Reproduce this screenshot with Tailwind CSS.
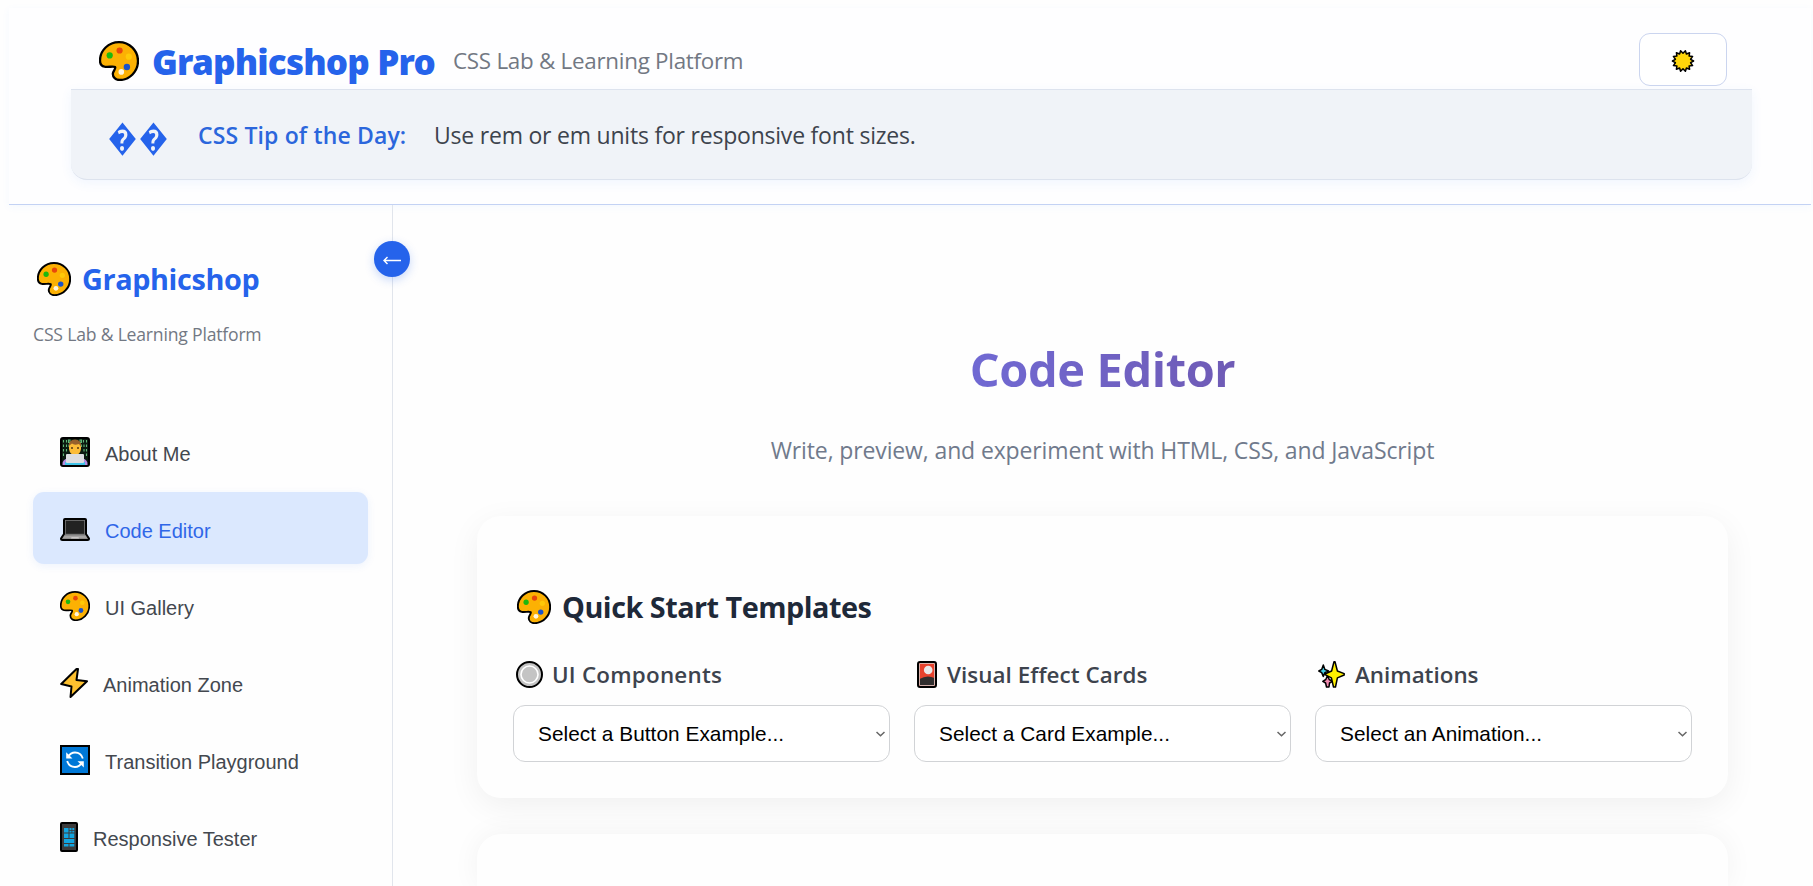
<!DOCTYPE html>
<html lang="en">
<head>
<meta charset="utf-8">
<title>Graphicshop Pro</title>
<script src="https://cdn.jsdelivr.net/npm/@tailwindcss/browser@4"></script>
</head>
<body class="h-screen overflow-hidden bg-[#fefefe] font-['Open_Sans','Noto_Sans',sans-serif] text-[#3d434d]">
<svg class="hidden">
  <symbol id="palette" viewBox="0 0 40 40">
    <path d="M20 1.2C30.5 1.2 39 9.5 39 20C39 30.5 30.5 39 20.5 39C16.500 39 13.800 36.200 13.800 32.800C13.800 30 17.500 27.200 16 26C14.500 25 9 26.400 5.500 25.700C2.500 25 1 22.500 1 19.500C1 9.200 9.600 1.200 20 1.200Z" fill="#fcb103" stroke="#000" stroke-width="2.3"/>
    <circle cx="10.700" cy="14.400" r="3.100" fill="#1db80f"/><circle cx="20.600" cy="9.500" r="3.100" fill="#e8480c"/><circle cx="29.800" cy="15.700" r="3.100" fill="#ffc907"/><circle cx="27.900" cy="26" r="3.200" fill="#1a52c9"/><circle cx="22.300" cy="30.900" r="2.800" fill="#fff6df"/>
  </symbol>
</svg>
<div class="flex h-full flex-col">
  <header class="relative mt-2 mr-[2px] ml-[9px] h-[197px] shrink-0 border-b border-[#c3d2f4] bg-[#fefeff] pr-[59px] pl-[62px] shadow-[0_2px_8px_rgba(59,130,246,0.05)]">
    <div class="flex h-[81px] items-center pt-[25px] pr-[25px] pl-7">
      <svg class="size-10 shrink-0"><use href="#palette"/></svg>
      <h1 class="mt-[2px] ml-[13px] w-[285px] font-['Noto_Sans',sans-serif] text-[35px] leading-10 font-black tracking-[-0.820px] whitespace-nowrap text-[#2563eb]">Graphicshop Pro</h1>
      <p class="mb-[1px] ml-[16px] text-[22.4px] leading-8 tracking-[-0.270px] whitespace-nowrap text-[#727883]">CSS Lab &amp; Learning Platform</p>
      <button class="-mt-[3px] ml-auto flex h-[53px] w-[88px] shrink-0 items-center justify-center rounded-[11px] border border-[#cbd5ef] bg-white">
        <svg class="mt-[3px] size-6" viewBox="-12 -12 24 24"><path d="M10.600 0L7.600 1.700L9.600 4.600L6.100 4.900L6.600 8.300L3.400 7L2.400 10.300L0 7.800L-2.400 10.300L-3.400 7L-6.600 8.300L-6.100 4.900L-9.600 4.600L-7.600 1.700L-10.600 0L-7.600 -1.700L-9.600 -4.600L-6.100 -4.900L-6.600 -8.300L-3.400 -7L-2.400 -10.300L0 -7.800L2.400 -10.300L3.400 -7L6.600 -8.300L6.100 -4.900L9.600 -4.600L7.600 -1.700Z" fill="#ffd60a" stroke="#000" stroke-width="1.500" stroke-linejoin="round"/></svg>
      </button>
    </div>
    <div class="flex h-[91px] items-center rounded-b-2xl border-y border-[#dde3ee] bg-[#f0f3f8] pl-[37px] text-[23px] leading-8 whitespace-nowrap shadow-[0_3px_12px_rgba(59,130,246,0.07)]">
      <span class="mt-[2px] w-[62px] scale-y-125 text-[29px] leading-8 tracking-[2px] text-[#2563eb]">��</span>
      <span class="mt-[1px] ml-[28px] w-[208px] font-semibold tracking-[0.140px] text-[#2b66dc]">CSS Tip of the Day:</span>
      <span class="mt-[1px] ml-[28px] tracking-[-0.215px]">Use rem or em units for responsive font sizes.</span>
    </div>
  </header>

  <div class="flex min-h-0 flex-1">
    <aside class="relative w-[393px] shrink-0 border-r border-[#e1e5ec] pt-[54px] pr-6 pl-[33px]">
      <button class="absolute top-[36px] -right-[18px] flex size-9 items-center justify-center rounded-full bg-[#2563eb] shadow-[0_3px_10px_rgba(37,99,235,0.25)]">
        <svg class="h-5 w-5" viewBox="0 0 20 20" fill="none" stroke="#fff" stroke-width="1.400"><path d="M2 11.500H19M5.500 8L2 11.500L5.500 15"/></svg>
      </button>
      <div class="flex h-10 items-center pl-1">
        <svg class="size-[34px] shrink-0"><use href="#palette"/></svg>
        <h2 class="ml-[11px] text-[28.800px] leading-10 font-bold tracking-[-0.370px] text-[#2563eb]">Graphicshop</h2>
      </div>
      <p class="mt-[23px] h-6 text-[17.600px] leading-6 tracking-[-0.200px] whitespace-nowrap text-[#727883]">CSS Lab &amp; Learning Platform</p>
      <nav class="mt-[69px] flex h-[266px] flex-col gap-[5px] font-['Liberation_Sans',sans-serif] text-[20px] leading-6 text-[#43484f]">
        <a class="flex h-[72px] shrink-0 items-center gap-[15px] pl-[27px]">
          <svg class="mt-[2px] size-[30px]" viewBox="0 0 30 30">
            <rect x="1" y="1" width="28" height="28" rx="2" fill="#0b1a10" stroke="#000" stroke-width="2"/>
            <g fill="none" stroke="#62b878" stroke-width="1.100"><path d="M3.500 3V5.500M6.500 3V5.500M23.500 3V5.500M26.500 3V5.500M3.500 7.500V10M6.500 7.500V10M9 7.500V10M21.500 7.500V10M24 7.500V10M26.500 7.500V10M3.500 12V14.500M6.500 12V14.500M24 12V14.500M26.500 12V14.500M3.500 16.500V19M26.500 16.500V19"/><path d="M8.500 3h1.500v2.500h-1.500zM20 3h1.500v2.500h-1.500z"/></g>
            <path d="M2.500 28Q2 22.500 7.500 21.500H22.500Q28 22.500 27.500 28Z" fill="#b58be0"/>
            <path d="M5 25H25V28H5Z" fill="#3fc3e8"/>
            <path d="M9 8Q9 4 15 4Q21 4 21 9V12Q20 18 15 18Q10 18 9 12Z" fill="#fcbc38"/>
            <path d="M8.800 9Q8.500 3 15 2.500Q21.500 2.500 21.200 10L19 7Q14 8.500 12 6.500Z" fill="#96602c"/>
            <path d="M12 10V12M18 10V12" stroke="#3b2410" stroke-width="1.300"/>
            <rect x="6" y="17" width="18" height="9" rx="1" fill="#dcdde0"/>
          </svg>
          <span class="pt-[5px]">About Me</span>
        </a>
        <a class="flex h-[72px] shrink-0 items-center gap-[15px] rounded-[11px] bg-[#dbe8fe] pl-[27px] text-[#2f66e8] shadow-[0_2px_8px_rgba(37,99,235,0.08)]">
          <svg class="mt-[2px] size-[30px]" viewBox="0 0 30 30">
            <path d="M4 20V6Q4 5 5 5H25Q26 5 26 6V20L29 24.500Q29 26 27.500 26H2.500Q1 26 1 24.500Z" fill="#777" stroke="#000" stroke-width="2" stroke-linejoin="round"/>
            <rect x="5.800" y="6.800" width="18.400" height="13" fill="#222"/>
            <path d="M4.500 21.500H25.500L27.500 24.500H2.500Z" fill="#a5a3a3"/><path d="M11.500 23H18.500L19 24.500H11Z" fill="#c9c7c7"/>
          </svg>
          <span class="pt-[5px]">Code Editor</span>
        </a>
        <a class="flex h-[72px] shrink-0 items-center gap-[15px] pl-[27px]">
          <svg class="mt-[2px] size-[30px]"><use href="#palette"/></svg>
          <span class="pt-[5px]">UI Gallery</span>
        </a>
        <a class="flex h-[72px] shrink-0 items-center gap-[15px] pl-[27px]">
          <svg class="mt-[2px] h-[30px] w-7" viewBox="0 0 28 30"><path d="M16.500 1L1.200 16L11.500 18.500L10.500 29L27 13.200L16.500 12L18 1Z" fill="#fdc02f" stroke="#000" stroke-width="2" stroke-linejoin="round"/></svg>
          <span class="pt-[5px]">Animation Zone</span>
        </a>
        <a class="flex h-[72px] shrink-0 items-center gap-[15px] pl-[27px]">
          <svg class="mt-[2px] size-[30px]" viewBox="0 0 30 30"><rect x="1" y="1" width="28" height="28" fill="#0078d7" stroke="#000" stroke-width="2"/><g fill="none" stroke="#fff" stroke-width="1.800"><path d="M8 12Q10.500 7.500 15 7.500Q21 7.500 22.800 13.500M22 17.500Q19.500 22 15 22Q9 22 7.200 16"/></g><path d="M6.200 7.200V13.500H12.500ZM23.800 22.500V16.200H17.500Z" fill="#fff"/></svg>
          <span class="pt-[5px]">Transition Playground</span>
        </a>
        <a class="flex h-[72px] shrink-0 items-center gap-[15px] pl-[27px]">
          <svg class="mt-[2px] h-[30px] w-[18px]" viewBox="0 0 18 30"><rect x="1" y="1" width="16" height="28" rx="1" fill="#3b3b3b" stroke="#000" stroke-width="2"/><g fill="#12a5e0"><path d="M4 6h4.500v4.500H4zM9.500 6h2v2h-2zM12.300 6h2v2h-2zM9.500 8.700h2v1.800h-2zM12.300 8.700h2v1.800h-2zM4 11.500h4.500V16H4zM9.500 11.500h4.800V16H9.500zM4 17h10.300v4H4zM4 22h4.500v2.500H4zM9.500 22h4.800v2.500H9.500z"/></g></svg>
          <span class="pt-[5px]">Responsive Tester</span>
        </a>
      </nav>
    </aside>

    <main class="min-w-0 flex-1 pr-[85px] pl-[84px]">
      <h2 class="mt-[132px] h-16 text-center text-[47px] leading-[64px] font-bold tracking-[-0.400px]"><span class="bg-linear-to-r from-[#7069d3] to-[#6f5bb5] bg-clip-text text-transparent">Code Editor</span></h2>
      <p class="mt-[33px] h-8 text-center text-[23px] leading-8 tracking-[-0.130px] text-[#707a8c]">Write, preview, and experiment with HTML, CSS, and JavaScript</p>

      <section class="mt-[50px] h-[282px] rounded-3xl bg-[#fefefe] px-9 pt-[70px] shadow-[0_8px_32px_rgba(0,0,0,0.06)]">
        <div class="flex h-10 items-center pl-1">
          <svg class="mt-[2px] size-[34px]"><use href="#palette"/></svg>
          <h3 class="mt-[2px] ml-[11px] text-[28.800px] leading-10 font-bold tracking-[-0.500px] text-gray-800">Quick Start Templates</h3>
        </div>
        <div class="mt-8 grid grid-cols-3 gap-6">
          <div>
            <div class="flex h-8 items-center pl-[3px]">
              <svg class="mt-[1px] size-[27px]" viewBox="0 0 27 27"><circle cx="13.500" cy="13.500" r="12.500" fill="#c4c4c4" stroke="#000" stroke-width="2"/><circle cx="13.500" cy="13.500" r="8.500" fill="#c4c4c4" stroke="#fff" stroke-width="1.600"/></svg>
              <span class="mt-[1px] ml-[9px] text-[22.400px] leading-8 font-semibold tracking-[0.224px]">UI Components</span>
            </div>
            <button class="mt-[15px] flex h-[57px] w-full items-center justify-between rounded-xl border border-[#d1d3d6] bg-white pr-[4px] pl-[24px] font-['Liberation_Sans',sans-serif] text-[20.800px] leading-6 tracking-[0.040px] text-black">Select a Button Example...<svg class="h-[6px] w-[9px]" viewBox="0 0 9 6" fill="none" stroke="#666" stroke-width="1.500"><path d="M.500 1L4.500 4.800L8.500 1"/></svg></button>
          </div>
          <div>
            <div class="flex h-8 items-center pl-[3px]">
              <svg class="mt-[1px] h-[27px] w-5" viewBox="0 0 20 27"><rect x="1" y="1" width="18" height="25" rx="2" fill="#e8432e" stroke="#000" stroke-width="2"/><path d="M2.500 18Q10 13.500 17.500 17V24.500H2.500Z" fill="#302e2e"/><rect x="2.500" y="2.500" width="15" height="22" rx=".500" fill="none" stroke="#d9bcb8" stroke-width=".900"/><circle cx="11.200" cy="9" r="4.300" fill="#ebe9ea"/></svg>
              <span class="mt-[1px] ml-[10px] text-[22.400px] leading-8 font-semibold tracking-[0.053px]">Visual Effect Cards</span>
            </div>
            <button class="mt-[15px] flex h-[57px] w-full items-center justify-between rounded-xl border border-[#d1d3d6] bg-white pr-[4px] pl-[24px] font-['Liberation_Sans',sans-serif] text-[20.800px] leading-6 tracking-[0.040px] text-black">Select a Card Example...<svg class="h-[6px] w-[9px]" viewBox="0 0 9 6" fill="none" stroke="#666" stroke-width="1.500"><path d="M.500 1L4.500 4.800L8.500 1"/></svg></button>
          </div>
          <div>
            <div class="flex h-8 items-center pl-[3px]">
              <svg class="mt-[1px] size-[27px]" viewBox="0 0 27 27" stroke="#000" stroke-linejoin="round" stroke-width="1.500"><path d="M5.300 4L6.900 8.400L10.500 10L6.900 11.600L5.300 15.500L3.700 11.600L.800 10L3.700 8.400Z" fill="#45cfe8"/><path d="M9.500 14.500L11.200 18.500L14.500 20.300L11.500 22L11 26H8.500L7.600 22L4.800 20.300L7.800 18.500Z" fill="#f28bb0"/><path d="M16 .800H17L19.400 10L26.200 12.600V14L19.400 16.900L17.500 26H15.500L13.400 16.900L7.500 13.900V12.800L13.600 10Z" fill="#fff000"/></svg>
              <span class="mt-[1px] ml-[10px] text-[22.400px] leading-8 font-semibold tracking-[0px]">Animations</span>
            </div>
            <button class="mt-[15px] flex h-[57px] w-full items-center justify-between rounded-xl border border-[#d1d3d6] bg-white pr-[4px] pl-[24px] font-['Liberation_Sans',sans-serif] text-[20.800px] leading-6 tracking-[0.040px] text-black">Select an Animation...<svg class="h-[6px] w-[9px]" viewBox="0 0 9 6" fill="none" stroke="#666" stroke-width="1.500"><path d="M.500 1L4.500 4.800L8.500 1"/></svg></button>
          </div>
        </div>
      </section>
      <section class="mt-9 h-[52px] rounded-t-3xl bg-[#fefefe] shadow-[0_0_28px_rgba(0,0,0,0.05)]"></section>
    </main>
  </div>
</div>
</body>
</html>
